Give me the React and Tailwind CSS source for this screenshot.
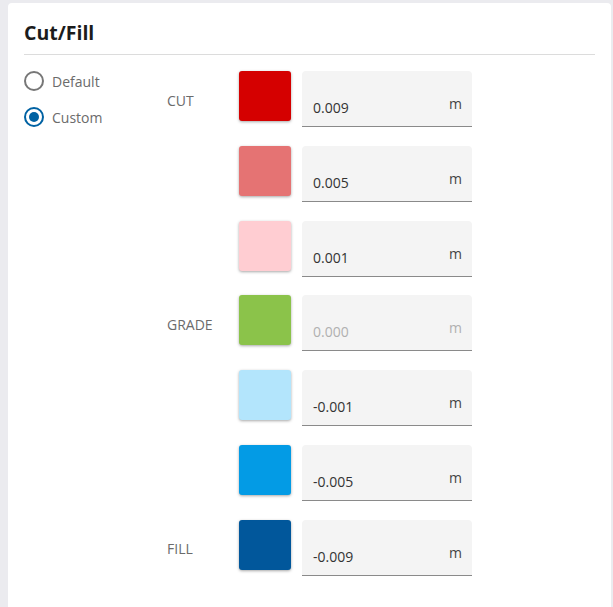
const rows = [
  { label: "CUT", color: "bg-[#d50000]", value: "0.009" },
  { label: "", color: "bg-[#e57373]", value: "0.005" },
  { label: "", color: "bg-[#ffcdd2]", value: "0.001" },
  { label: "GRADE", color: "bg-[#8bc34a]", value: "0.000", disabled: true },
  { label: "", color: "bg-[#b3e5fc]", value: "-0.001" },
  { label: "", color: "bg-[#039be5]", value: "-0.005" },
  { label: "FILL", color: "bg-[#01579b]", value: "-0.009" },
];

export default function App() {
  return (
    <div
      className="h-[607px] overflow-hidden bg-[#ebebef] pl-2 pr-[2px] pt-[3px]"
      style={{ fontFamily: '"Open Sans", "Noto Sans", sans-serif' }}
    >
      <div className="h-[610px] rounded-[4px] bg-white px-4 pt-[17px]">
        <h2 className="text-[19.5px] font-bold leading-[26px] text-[#1c1c1c]">Cut/Fill</h2>
        <div className="mt-[8px] h-px bg-[#dcdcdc]" />

        <div className="mt-4 flex">
          {/* Mode */}
          <div className="flex w-[143px] flex-col gap-4">
            <Radio label="Default" />
            <Radio label="Custom" checked />
          </div>

          {/* Ranges */}
          <div className="flex flex-col gap-[18.8px]">
            {rows.map((r, i) => (
              <div key={i} className="flex h-[56px]">
                <div className="flex w-[72px] items-center pt-[2px] text-[14px] text-[#6b6b6b]">
                  {r.label}
                </div>
                <div
                  className={`h-[50px] w-[52px] rounded-[3px] shadow-[0_1px_3px_rgba(0,0,0,0.35)] ${r.color}`}
                />
                <div className="ml-[11px] flex w-[170px] items-end justify-between rounded-t-[4px] border-b border-[#8a8a8a] bg-[#f4f4f4] pb-[8px] pl-[11px] pr-[10px]">
                  <span
                    className={`text-[14px] leading-5 ${r.disabled ? "text-[#b0b0b0]" : "text-[#333]"}`}
                  >
                    {r.value}
                  </span>
                  <span
                    className={`mb-[4px] text-[14px] leading-5 ${r.disabled ? "text-[#b0b0b0]" : "text-[#444]"}`}
                  >
                    m
                  </span>
                </div>
              </div>
            ))}
          </div>
        </div>
      </div>
    </div>
  );
}

function Radio({ label, checked }) {
  return (
    <div className="flex h-5 items-center gap-[8px]">
      <span
        className={`flex h-5 w-5 items-center justify-center rounded-full border-2 ${
          checked ? "border-[#0062a3]" : "border-[#777]"
        }`}
      >
        {checked && <span className="h-[10px] w-[10px] rounded-full bg-[#0062a3]" />}
      </span>
      <span className="text-[14px] text-[#6b6b6b]">{label}</span>
    </div>
  );
}
